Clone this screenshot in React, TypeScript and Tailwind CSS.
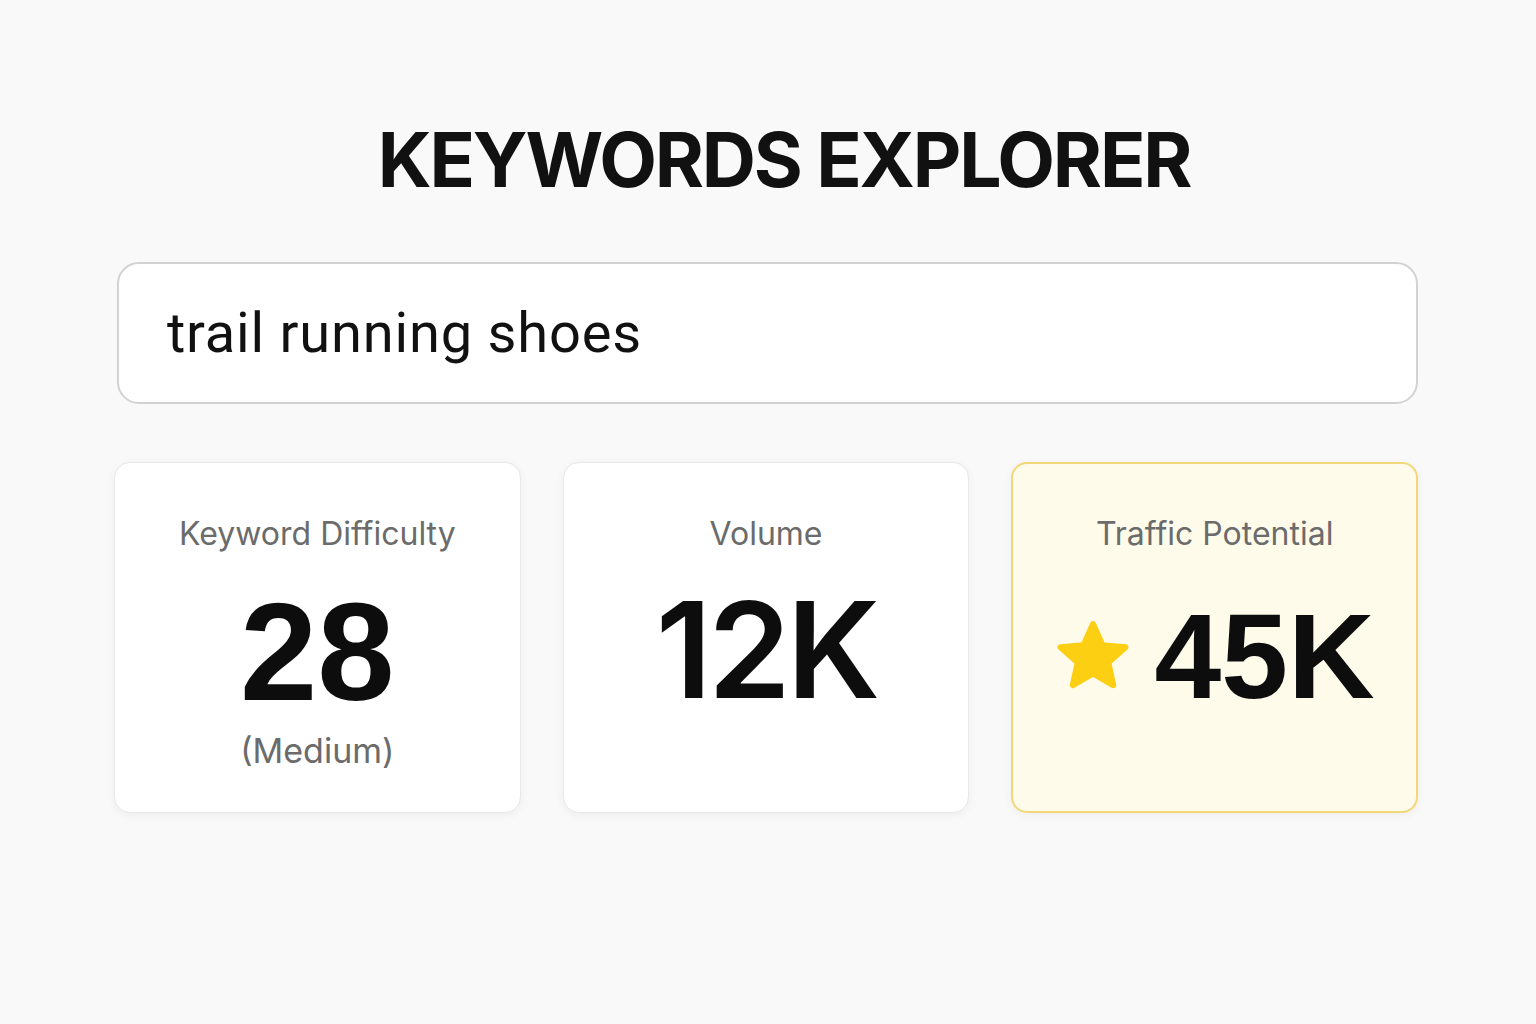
import React from "react";

function Star() {
  return (
    <svg width="76" height="74" viewBox="0 0 74 72" className="shrink-0">
      <polygon
        points="37,5 46.2,25.5 68.5,27.5 51.8,42.3 56.6,64.3 37,52.8 17.4,64.3 22.2,42.3 5.5,27.5 27.8,25.5"
        fill="#fccf13"
        stroke="#fccf13"
        strokeWidth="6"
        strokeLinejoin="round"
      />
    </svg>
  );
}

export default function App() {
  return (
    <div className="min-h-[1024px] w-full bg-[#f9f9f9] font-['Inter',sans-serif]">
      <div className="ml-[114px] flex w-[1304px] flex-col pt-[122px]">
        <h1 className="pl-[36px] text-center text-[75px] font-bold leading-none tracking-[-2.2px] text-[#111]">
          KEYWORDS EXPLORER
        </h1>

        <div className="mt-[65px] ml-[3px] flex h-[142px] items-center rounded-[22px] border-2 border-[#d2d2d2] bg-white pl-[48px]">
          <span className="font-['Roboto',sans-serif] text-[56px] leading-none tracking-[0.8px] text-[#111]">
            trail running shoes
          </span>
        </div>

        <div className="mt-[58px] grid grid-cols-3 gap-[42px]">
          <div className="flex h-[351px] flex-col items-center rounded-2xl border border-[#e8e8e8] bg-white pt-[55px] shadow-[0_2px_10px_rgba(0,0,0,0.05)]">
            <div className="text-[32px] leading-none text-[#6b6b6b]">Keyword Difficulty</div>
            <div className="mt-[32px] font-['Liberation_Sans',sans-serif] text-[139px] font-bold leading-none text-[#0d0d0d]">28</div>
            <div className="mt-[13px] text-[34px] leading-none text-[#6b6b6b]">(Medium)</div>
          </div>

          <div className="flex h-[351px] flex-col items-center rounded-2xl border border-[#e8e8e8] bg-white pt-[55px] shadow-[0_2px_10px_rgba(0,0,0,0.05)]">
            <div className="text-[32px] leading-none text-[#6b6b6b]">Volume</div>
            <div className="mt-[33px] text-[133px] font-semibold leading-none tracking-[-4px] text-[#0d0d0d]">12K</div>
          </div>

          <div className="flex h-[351px] flex-col items-center rounded-2xl border-2 border-[#f2d779] bg-[#fefbeb] pt-[54px] shadow-[0_2px_10px_rgba(0,0,0,0.05)]">
            <div className="text-[32px] leading-none text-[#6b6b6b]">Traffic Potential</div>
            <div className="mt-[46px] flex items-center gap-[24px]">
              <Star />
              <div className="font-['Liberation_Sans',sans-serif] text-[120px] font-bold leading-none text-[#0d0d0d]">45K</div>
            </div>
          </div>
        </div>
      </div>
    </div>
  );
}
